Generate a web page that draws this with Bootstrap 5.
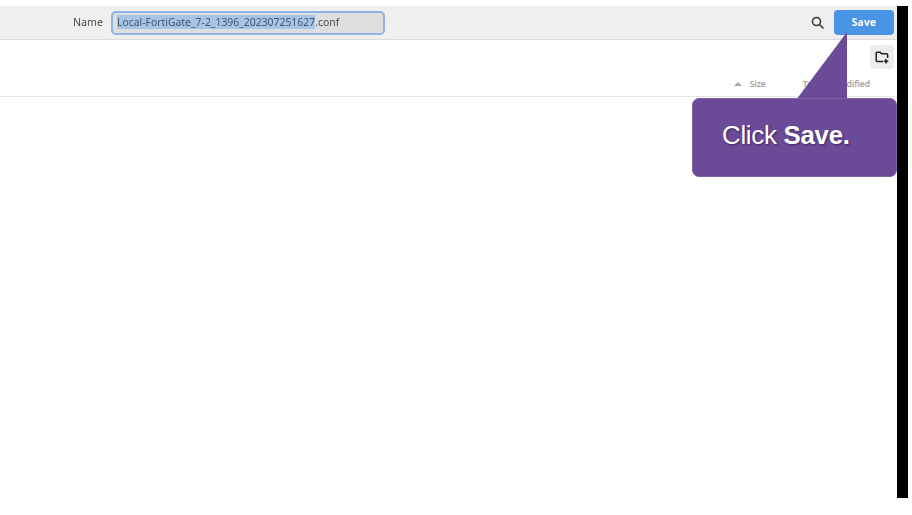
<!DOCTYPE html>
<html lang="en">
<head>
    <meta charset="UTF-8">
    <meta name="viewport" content="width=device-width, initial-scale=1.0">
    <title>Save file</title>
    <link href="https://cdn.jsdelivr.net/npm/bootstrap@5.3.0/dist/css/bootstrap.min.css" rel="stylesheet">
    <style>
        html, body { height: 100%; }
        body { background: #fff; font-family: "Noto Sans", "Open Sans", sans-serif; overflow: hidden; }
        .shot-frame { position: relative; width: 908px; height: 492px; margin-top: 6px; border-right: 11px solid #000; }
        .save-header { height: 34px; background: #efefef; border-bottom: 1px solid #dcdcdc; padding: 0 3px 0 73px; }
        .name-label { font-size: 10.6px; color: #4a4a4a; width: 38px; filter: blur(.3px); }
        .name-input { width: 274px; height: 24px; background: #dedede; border: 2px solid #8db4e2; border-radius: 5px; font-size: 10.4px; color: #4a4a4a; padding: 0 4px; line-height: 19px; filter: blur(.3px); }
        .name-input span { background: #a9c4e2; color: #3c5878; }
        .save-btn { width: 60px; height: 25px; padding: 0; background: #4a94e6; border: 0; border-radius: 4px; color: #fff; font-size: 10.5px; font-weight: 700; filter: blur(.25px); }
        .search-ico { margin-right: 10px; }
        .tool-row { height: 36px; padding: 5px 3px 0 0; }
        .folder-btn { width: 24px; height: 24px; background: #ececec; border-radius: 4px; }
        .col-heads { height: 16px; border-bottom: 1px solid #e6e6e6; box-sizing: content-box; padding-bottom: 4px; font-size: 8.5px; font-weight: 600; color: #a2a2a2; padding-right: 27px; }
        .sort-mark { width: 0; height: 0; border: 4px solid transparent; border-top: 0; border-bottom: 4px solid #a8a8a8; margin-right: 8px; }
        .head-size { width: 53px; }
        .head-type { margin-right: 11px; }
        .callout { position: absolute; left: 692px; top: 92px; width: 205px; height: 79px; background: #6b4a97; border: 1px solid #7f62a8; border-radius: 7px; color: #fff; font-family: "Liberation Sans", Arial, sans-serif; font-size: 25.8px; letter-spacing: -0.25px; padding: 0 0 4px 29px; text-shadow: 1px 1px 2px rgba(30, 15, 50, .55); }
        .callout-tail { position: absolute; left: 796px; top: 26px; }
    </style>
</head>
<body>
    <div class="shot-frame">
        <div class="save-header d-flex align-items-center">
            <div class="name-label">Name</div>
            <div class="name-input"><span>Local-FortiGate_7-2_1396_202307251627</span>.conf</div>
            <svg class="search-ico ms-auto" width="13" height="13" viewBox="0 0 13 13" fill="none" stroke="#3a3a3a" stroke-width="1.6">
                <circle cx="5.5" cy="5.5" r="4"/>
                <path d="M8.5 8.5 12 12" stroke-linecap="round"/>
            </svg>
            <button type="button" class="btn save-btn">Save</button>
        </div>
        <div class="tool-row d-flex justify-content-end">
            <div class="folder-btn d-flex align-items-center justify-content-center">
                <svg width="14" height="13" viewBox="0 0 14 13" fill="none" stroke="#1f1f1f" stroke-width="1.5">
                    <path d="M8 10.5H2.2a1 1 0 0 1-1-1V2.2a1 1 0 0 1 1-1h3l1.4 1.6h5a1 1 0 0 1 1 1V7"/>
                    <path d="M11 8v4.4M8.8 10.2h4.4"/>
                </svg>
            </div>
        </div>
        <div class="col-heads d-flex justify-content-end align-items-center">
            <div class="sort-mark"></div>
            <div class="head-size">Size</div>
            <div class="head-type">Type</div>
            <div>Modified</div>
        </div>
        <svg class="callout-tail" width="52" height="68" viewBox="0 0 52 68">
            <polygon points="0,68 51,0 51,68" fill="#6b4a97"/>
        </svg>
        <div class="callout d-flex align-items-center">
            <div>Click <b>Save.</b></div>
        </div>
    </div>
    <script src="https://cdn.jsdelivr.net/npm/bootstrap@5.3.0/dist/js/bootstrap.bundle.min.js"></script>
</body>
</html>
